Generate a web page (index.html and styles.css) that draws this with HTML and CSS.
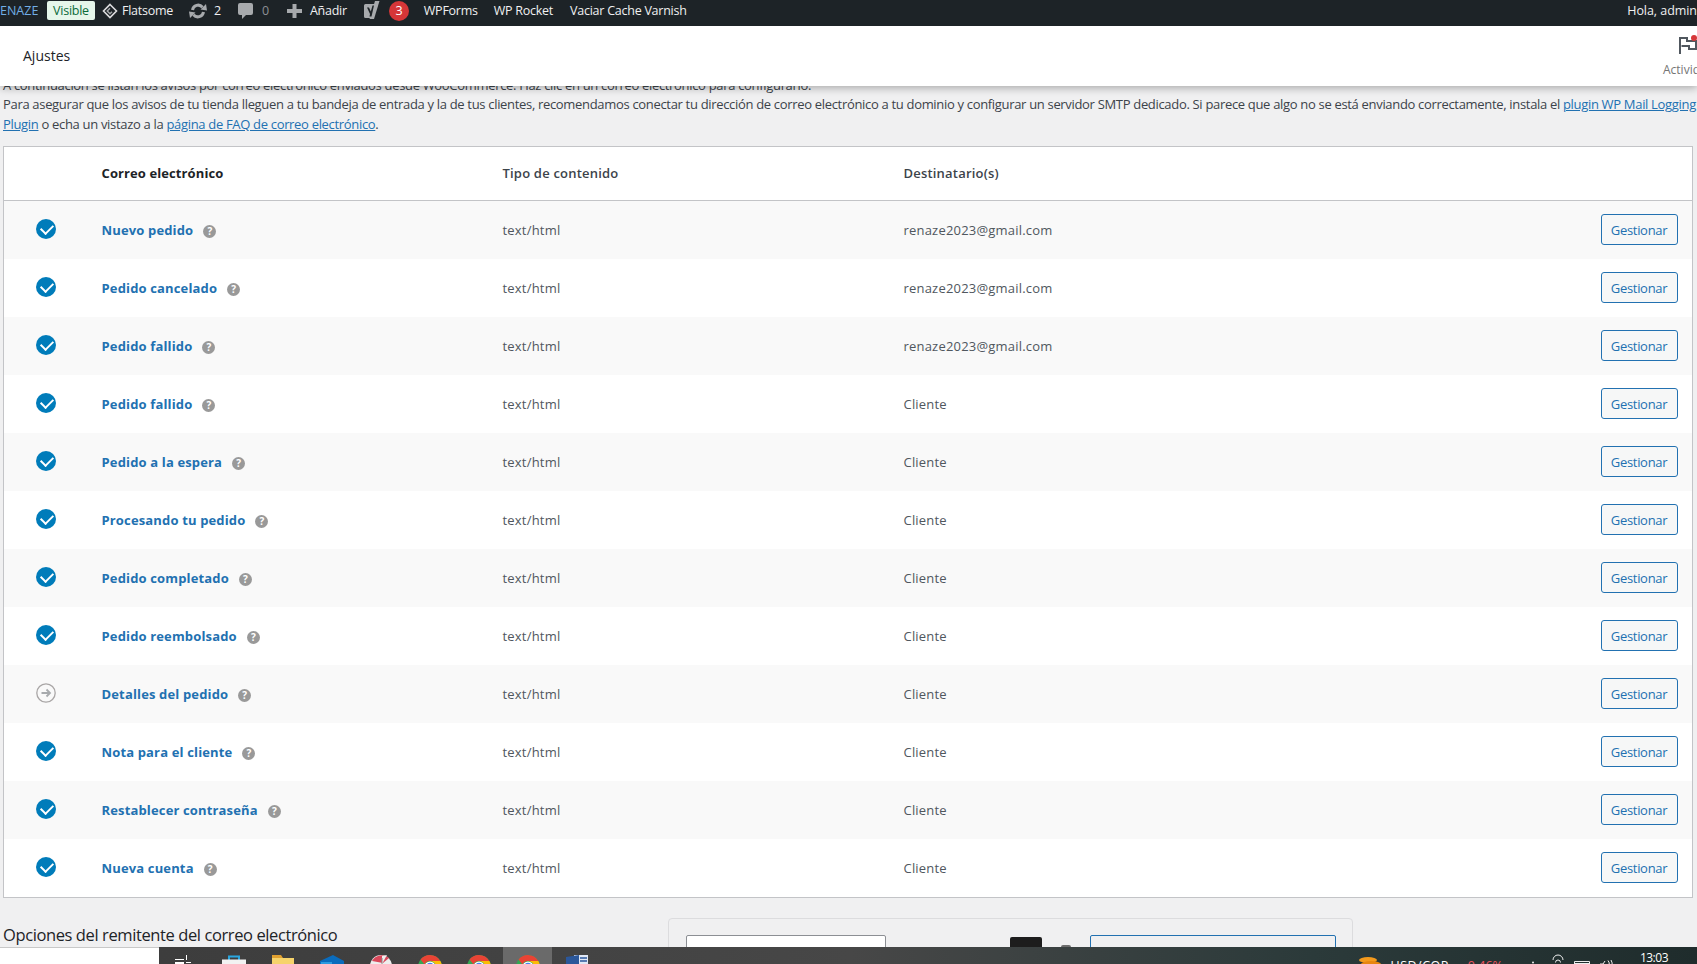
FILE: index.html
```html
<!DOCTYPE html>
<html lang="es">

<head>
    <meta charset="UTF-8">
    <meta name="viewport" content="width=device-width, initial-scale=1.0">
    <title>Ajustes</title>
    <link rel="stylesheet" href="styles.css">
</head>

<body>
    <div id="adminbar">
        <a class="bar-site">ENAZE</a>
        <span class="bar-visible">Visible</span>
        <a class="bar-item bar-flatsome">
            <svg width="16" height="16" viewBox="0 0 16 16"><path d="M8 1.500L14.500 8 8 14.500 1.500 8z" fill="none" stroke="#dcdcde" stroke-width="1.600"/><path d="M8 5.200L5.200 8 8 10.800 10 8.800" fill="none" stroke="#a7aaad" stroke-width="1.400"/></svg>
            Flatsome
        </a>
        <a class="bar-item bar-updates">
            <svg width="20" height="16" viewBox="0 0 20 16"><path d="M4.500 7a5.700 5.700 0 0 1 10-2.800M15.500 9a5.700 5.700 0 0 1-10 2.800" fill="none" stroke="#a7aaad" stroke-width="3"/><path d="M12.500 6.500L19 7.500 18 1zM7.500 9.500L1 8.500 2 15z" fill="#a7aaad"/></svg>
            2
        </a>
        <a class="bar-item bar-comments">
            <svg width="15" height="16" viewBox="0 0 15 16"><path d="M2 0h11a2 2 0 0 1 2 2v8a2 2 0 0 1-2 2H8l-4 4v-4H2a2 2 0 0 1-2-2V2a2 2 0 0 1 2-2z" fill="#a7aaad"/></svg>
            <span class="muted">0</span>
        </a>
        <a class="bar-item bar-add">
            <svg width="15" height="14" viewBox="0 0 15 14"><path d="M5.500 0h4v5h5.500v4H9.500v5h-4V9H0V5h5.500z" fill="#a7aaad"/></svg>
            Añadir
        </a>
        <a class="bar-item bar-yoast">
            <svg width="17" height="20" viewBox="0 0 17 20"><path d="M2.500 3H13l-4 14H2.500A1.500 1.500 0 0 1 1 15.500v-11A1.500 1.500 0 0 1 2.500 3z" fill="#a7aaad"/><path d="M12 0h4.500l-5.500 18H6.500z" fill="#a7aaad"/><path d="M4 6.500h2l1.800 4 1.700-6h1.500L8.500 15.500H6.500L7 13z" fill="#1d2327"/></svg>
            <span class="bar-badge">3</span>
        </a>
        <a class="bar-item">WPForms</a>
        <a class="bar-item bar-rocket">WP Rocket</a>
        <a class="bar-item">Vaciar Cache Varnish</a>
        <a class="bar-hello">Hola, admin</a>
    </div>

    <div id="header">
        <h1>Ajustes</h1>
        <div class="activity">
            <svg width="20" height="20" viewBox="0 0 20 20"><path d="M2 19V3h7v3h9v8h-7v-3H3.500" fill="none" stroke="#50575e" stroke-width="2"/></svg>
            <i class="activity-dot"></i>
            <span>Actividad</span>
        </div>
    </div>

    <div id="content">
        <p class="intro intro-first">A continuación se listan los avisos por correo electrónico enviados desde WooCommerce. Haz clic en un correo electrónico para configurarlo.</p>
        <p class="intro">Para asegurar que los avisos de tu tienda lleguen a tu bandeja de entrada y la de tus clientes, recomendamos conectar tu dirección de correo electrónico a tu dominio y configurar un servidor SMTP dedicado. Si parece que algo no se está enviando correctamente, instala el <a href="#">plugin WP Mail Logging</a></p>
        <p class="intro"><a href="#">Plugin</a> o echa un vistazo a la <a href="#">página de FAQ de correo electrónico</a>.</p>

        <table id="emails">
            <colgroup>
                <col class="col-status">
                <col class="col-name">
                <col class="col-type">
                <col>
                <col class="col-action">
            </colgroup>
            <thead>
                <tr>
                    <th></th>
                    <th class="strong">Correo electrónico</th>
                    <th>Tipo de contenido</th>
                    <th>Destinatario(s)</th>
                    <th></th>
                </tr>
            </thead>
            <tbody>
                <tr>
                    <td><i class="st st-on"></i></td>
                    <td><a class="name">Nuevo pedido</a><i class="help">?</i></td>
                    <td>text/html</td>
                    <td>renaze2023@gmail.com</td>
                    <td><a class="btn">Gestionar</a></td>
                </tr>
                <tr>
                    <td><i class="st st-on"></i></td>
                    <td><a class="name">Pedido cancelado</a><i class="help">?</i></td>
                    <td>text/html</td>
                    <td>renaze2023@gmail.com</td>
                    <td><a class="btn">Gestionar</a></td>
                </tr>
                <tr>
                    <td><i class="st st-on"></i></td>
                    <td><a class="name">Pedido fallido</a><i class="help">?</i></td>
                    <td>text/html</td>
                    <td>renaze2023@gmail.com</td>
                    <td><a class="btn">Gestionar</a></td>
                </tr>
                <tr>
                    <td><i class="st st-on"></i></td>
                    <td><a class="name">Pedido fallido</a><i class="help">?</i></td>
                    <td>text/html</td>
                    <td>Cliente</td>
                    <td><a class="btn">Gestionar</a></td>
                </tr>
                <tr>
                    <td><i class="st st-on"></i></td>
                    <td><a class="name">Pedido a la espera</a><i class="help">?</i></td>
                    <td>text/html</td>
                    <td>Cliente</td>
                    <td><a class="btn">Gestionar</a></td>
                </tr>
                <tr>
                    <td><i class="st st-on"></i></td>
                    <td><a class="name">Procesando tu pedido</a><i class="help">?</i></td>
                    <td>text/html</td>
                    <td>Cliente</td>
                    <td><a class="btn">Gestionar</a></td>
                </tr>
                <tr>
                    <td><i class="st st-on"></i></td>
                    <td><a class="name">Pedido completado</a><i class="help">?</i></td>
                    <td>text/html</td>
                    <td>Cliente</td>
                    <td><a class="btn">Gestionar</a></td>
                </tr>
                <tr>
                    <td><i class="st st-on"></i></td>
                    <td><a class="name">Pedido reembolsado</a><i class="help">?</i></td>
                    <td>text/html</td>
                    <td>Cliente</td>
                    <td><a class="btn">Gestionar</a></td>
                </tr>
                <tr>
                    <td>
                        <svg class="st-off" width="20" height="20" viewBox="0 0 20 20"><circle cx="10" cy="10" r="9.200" fill="none" stroke="#a9a6a6" stroke-width="1.300"/><path d="M5.500 10h8M10.500 6.500L14 10l-3.500 3.500" fill="none" stroke="#a7aaad" stroke-width="1.800"/></svg>
                    </td>
                    <td><a class="name">Detalles del pedido</a><i class="help">?</i></td>
                    <td>text/html</td>
                    <td>Cliente</td>
                    <td><a class="btn">Gestionar</a></td>
                </tr>
                <tr>
                    <td><i class="st st-on"></i></td>
                    <td><a class="name">Nota para el cliente</a><i class="help">?</i></td>
                    <td>text/html</td>
                    <td>Cliente</td>
                    <td><a class="btn">Gestionar</a></td>
                </tr>
                <tr>
                    <td><i class="st st-on"></i></td>
                    <td><a class="name">Restablecer contraseña</a><i class="help">?</i></td>
                    <td>text/html</td>
                    <td>Cliente</td>
                    <td><a class="btn">Gestionar</a></td>
                </tr>
                <tr>
                    <td><i class="st st-on"></i></td>
                    <td><a class="name">Nueva cuenta</a><i class="help">?</i></td>
                    <td>text/html</td>
                    <td>Cliente</td>
                    <td><a class="btn">Gestionar</a></td>
                </tr>
            </tbody>
        </table>

        <div class="sender">
            <h2>Opciones del remitente del correo electrónico</h2>
            <div class="preview">
                <span class="fake-input"></span>
                <span class="fake-dark"></span>
                <span class="fake-small"></span>
                <span class="fake-blue"></span>
            </div>
        </div>
    </div>

    <div id="taskbar-search"></div>
    <div id="taskbar">
        <div class="task-apps">
            <span class="app app-view"><svg width="16" height="9" viewBox="0 0 16 9"><path d="M0 4h9v1H0zM0 7h9v2H0zM11 0h1v5h-1zM11 7h5v1h-5z" fill="#fff"/></svg></span>
            <span class="app"><svg width="24" height="16" viewBox="0 0 24 16"><path d="M7 5V1.500h10V5" fill="none" stroke="#2aa7e0" stroke-width="2"/><rect y="4.500" width="24" height="12" fill="#f2f2f2"/></svg></span>
            <span class="app"><svg width="22" height="16" viewBox="0 0 22 16"><path d="M0 3h22v13H0z" fill="#f6d36b"/><path d="M0 0h9l2 3H0z" fill="#e0a030"/></svg></span>
            <span class="app"><svg width="24" height="16" viewBox="0 0 24 16"><path d="M13 0l11 6v10H0V6z" fill="#0a6cbd"/><rect x="1" y="7" width="11" height="9" fill="#2b9be0"/></svg></span>
            <span class="app"><svg width="22" height="16" viewBox="0 0 22 16"><circle cx="11" cy="11" r="11" fill="#eee"/><path d="M2 6a11 11 0 0 1 17-3l-6 5z" fill="#d9475a"/><path d="M12 1l5-1-5 9z" fill="#eee"/><path d="M12 3v6" stroke="#888"/></svg></span>
            <span class="app"><svg width="24" height="16" viewBox="0 0 24 16"><use href="#chrome"/></svg></span>
            <span class="app"><svg width="24" height="16" viewBox="0 0 24 16"><use href="#chrome"/></svg></span>
            <span class="app app-active"><svg width="24" height="16" viewBox="0 0 24 16"><use href="#chrome"/></svg></span>
            <span class="app"><svg width="22" height="16" viewBox="0 0 22 16"><rect x="8" y="0" width="14" height="16" fill="#dfe7f5"/><path d="M0 2l13-2v16H0z" fill="#2b579a"/><path d="M14 3h7M14 6h7" stroke="#2b579a" stroke-width="1.500"/></svg></span>
        </div>
        <div class="task-tray">
            <svg class="tray-coin" width="24" height="16" viewBox="0 0 24 16"><ellipse cx="10" cy="3" rx="9" ry="3" fill="#f39a1d"/><ellipse cx="13" cy="7" rx="10" ry="3" fill="#e8860f"/><ellipse cx="14" cy="11" rx="10" ry="3" fill="#f39a1d"/></svg>
            <span class="tray-pair">USD/COP</span>
            <span class="tray-change">-0.46%</span>
            <svg class="tray-icons" width="90" height="17" viewBox="0 0 90 17"><circle cx="5" cy="15.500" r="1" fill="#eee"/><path d="M25 13a5 5 0 0 1 10 0M27.500 15.500a2.500 2.500 0 0 1 5 0" fill="none" stroke="#eee"/><path d="M46.500 14.500h15v5h-15zM46.500 16.500h15" fill="none" stroke="#eee"/><path d="M72 17h3l2-3M80 13.500a5 5 0 0 1 1 5M83 13a8 8 0 0 1 1 6" fill="none" stroke="#eee"/></svg>
            <span class="tray-time">13:03</span>
        </div>
    </div>

    <svg class="defs" width="0" height="0">
        <defs>
            <g id="chrome">
                <circle cx="12" cy="12" r="12" fill="#34a853"/>
                <path d="M12 0A12 12 0 0 1 22.400 6H12a6 6 0 0 0-5.500 3.500L2.500 4.500A12 12 0 0 1 12 0z" fill="#e94335"/>
                <path d="M22.400 6A12 12 0 0 1 24 12H18a6 6 0 0 0-6-6z" fill="#fbbc05"/>
                <circle cx="12" cy="12" r="5.500" fill="#fff"/>
                <circle cx="12" cy="12" r="4.300" fill="#4285f4"/>
            </g>
        </defs>
    </svg>
</body>

</html>
```

FILE: styles.css
```css
* {
    margin: 0;
    padding: 0;
    box-sizing: border-box;
}

html,
body {
    height: 964px;
    overflow: hidden;
}

body {
    background: #f0f0f1;
    color: #3c434a;
    font-family: "Open Sans", "Liberation Sans", sans-serif;
    font-size: 13px;
}

a {
    color: #2271b1;
}

/* barra superior */
#adminbar {
    height: 26px;
    padding-bottom: 5px;
    background: #1d2327;
    color: #f0f0f1;
    display: flex;
    align-items: center;
    white-space: nowrap;
    font-size: 12.5px;
    letter-spacing: -0.25px;
    position: relative;
    z-index: 3;
}

.bar-site {
    width: 47px;
    color: #72aee6;
    letter-spacing: 0;
}

.bar-visible {
    width: 48px;
    height: 19px;
    margin-right: 7px;
    background: #e6f6ea;
    color: #0b6b3a;
    border-radius: 2px;
    text-align: center;
    line-height: 19px;
    font-weight: 500;
}

.bar-item {
    display: flex;
    align-items: center;
    margin-right: 16px;
    color: #f0f0f1;
}

.bar-flatsome svg {
    margin-right: 4px;
}

.bar-flatsome {
    margin-right: 15px;
}

.bar-updates svg {
    margin-right: 6px;
}

.bar-updates {
    margin-right: 17px;
}

.bar-comments svg {
    margin-right: 9px;
}

.bar-comments {
    margin-right: 18px;
}

.bar-add svg {
    margin-right: 8px;
}

.bar-yoast svg {
    margin-right: 9px;
}

.bar-yoast {
    margin-right: 15px;
}

.bar-rocket {
    margin-right: 17px;
}

.muted {
    color: #8c8f94;
}

.bar-badge {
    width: 20px;
    height: 20px;
    border-radius: 50%;
    background: #d63638;
    color: #fff;
    text-align: center;
    line-height: 20px;
}

.bar-hello {
    margin-left: auto;
    color: #f0f0f1;
    letter-spacing: -0.05px;
}

/* cabecera blanca */
#header {
    height: 60px;
    padding: 0 0 2px 23px;
    background: #fff;
    box-shadow: 0 2px 8px rgba(0, 0, 0, 0.3);
    display: flex;
    align-items: center;
    justify-content: space-between;
    position: relative;
    z-index: 2;
    overflow: hidden;
}

#header h1 {
    font-size: 14px;
    font-weight: 500;
    color: #1d2327;
}

.activity {
    width: 34px;
    height: 60px;
    position: relative;
    white-space: nowrap;
    color: #757575;
    font-size: 12px;
}

.activity svg {
    position: absolute;
    left: 15px;
    top: 10px;
}

.activity span {
    position: absolute;
    left: 0;
    top: 36px;
}

.activity-dot {
    position: absolute;
    left: 28px;
    top: 10px;
    width: 6px;
    height: 6px;
    border-radius: 50%;
    background: #d63638;
}

/* contenido */
#content {
    padding: 0 4px 0 3px;
    margin-top: -11px;
}

.intro {
    line-height: 20px;
    white-space: nowrap;
    letter-spacing: -0.32px;
}

.intro-first {
    margin-bottom: -1px;
}

#emails {
    width: 100%;
    table-layout: fixed;
    border-collapse: collapse;
    margin-top: 12px;
    background: #fff;
    border: 1px solid #c3c4c7;
    color: #50575e;
    letter-spacing: 0.2px;
}

.col-status {
    width: 98px;
}

.col-name {
    width: 401px;
}

.col-type {
    width: 401px;
}

.col-action {
    width: 100px;
}

#emails th {
    height: 54px;
    padding-bottom: 1px;
    text-align: left;
    font-weight: 600;
    color: #3c434a;
    border-bottom: 1px solid #c3c4c7;
}

#emails th.strong {
    color: #1d2327;
    font-weight: 700;
    letter-spacing: 0.1px;
}

#emails td {
    height: 58px;
}

#emails tbody tr:last-child td {
    height: 59px;
}

#emails tbody tr:nth-child(odd) {
    background: #f9f9f9;
}

.st {
    display: block;
    width: 20px;
    height: 20px;
    margin: -2px 0 0 32px;
    border-radius: 50%;
    position: relative;
}

.st-on {
    background: #007cba;
}

.st-on::after {
    content: "";
    position: absolute;
    left: 5px;
    top: 5px;
    width: 10px;
    height: 6px;
    border-left: 2.5px solid #fff;
    border-bottom: 2.5px solid #fff;
    transform: rotate(-45deg);
}

.st-off {
    display: block;
    margin: -2px 0 0 32px;
}

.name {
    font-weight: 700;
    letter-spacing: 0.15px;
}

.help {
    display: inline-block;
    width: 13px;
    height: 13px;
    margin-left: 10px;
    border-radius: 50%;
    background: #999;
    color: #fff;
    text-align: center;
    font-size: 10px;
    font-weight: 700;
    font-style: normal;
    line-height: 13px;
    letter-spacing: 0;
}

.btn {
    display: block;
    width: 77px;
    height: 31px;
    margin-left: 8px;
    border: 1px solid #2271b1;
    border-radius: 3px;
    background: #f6f7f7;
    text-align: center;
    line-height: 30px;
    letter-spacing: -0.3px;
}

/* opciones del remitente */
.sender {
    display: flex;
    margin-top: 21px;
}

.sender h2 {
    width: 665px;
    margin-top: 4px;
    font-size: 16.5px;
    font-weight: 500;
    letter-spacing: -0.4px;
    color: #1d2327;
    white-space: nowrap;
}

.preview {
    width: 685px;
    height: 60px;
    margin-top: -1px;
    background: #f0f0f1;
    border: 1px solid #dcdcde;
    border-radius: 4px;
    padding: 16px 0 0 17px;
    display: flex;
    align-items: flex-start;
}

.fake-input {
    width: 200px;
    height: 30px;
    background: #fff;
    border: 1px solid #8c8f94;
    border-radius: 2px;
}

.fake-dark {
    width: 32px;
    height: 30px;
    margin: 2px 0 0 124px;
    background: #1d1d1d;
    border-radius: 2px;
}

.fake-small {
    width: 10px;
    height: 10px;
    margin: 10px 0 0 19px;
    background: #6d6d6d;
    border-radius: 2px;
}

.fake-blue {
    width: 246px;
    height: 30px;
    margin-left: 19px;
    border: 1px solid #2271b1;
    border-radius: 2px;
}

/* barra de tareas de windows */
#taskbar-search {
    position: fixed;
    left: 0;
    bottom: 0;
    width: 159px;
    height: 17px;
    background: #fff;
    border-top: 1px solid #c8c8c8;
}

#taskbar {
    position: fixed;
    left: 159px;
    right: 0;
    bottom: 0;
    height: 17px;
    background: linear-gradient(90deg, #3d3d3d 0, #474747 45%, #2b3a3a 75%, #1f2c2c 100%);
    display: flex;
    justify-content: space-between;
    overflow: hidden;
    color: #fff;
}

.task-apps {
    display: flex;
}

.app {
    width: 49px;
    height: 17px;
    display: flex;
    justify-content: center;
    padding-top: 8px;
    overflow: hidden;
}

.app svg {
    flex-shrink: 0;
}

.app-view {
    width: 50px;
    justify-content: flex-start;
    padding: 8px 0 0 16px;
}

.app-active {
    background: #6a6a6a;
}

.task-tray {
    display: flex;
    align-items: flex-start;
    font-size: 12.5px;
    white-space: nowrap;
}

.tray-coin {
    margin-top: 10px;
}

.tray-pair {
    margin: 10px 0 0 9px;
    letter-spacing: 0.5px;
}

.tray-change {
    margin: 10px 0 0 15px;
    color: #f0525f;
}

.tray-icons {
    margin-left: 25px;
}

.tray-time {
    margin: 0 29px 0 22px;
    line-height: 21px;
    height: 17px;
    font-size: 12px;
    letter-spacing: -0.5px;
}

.defs {
    position: absolute;
}
```
